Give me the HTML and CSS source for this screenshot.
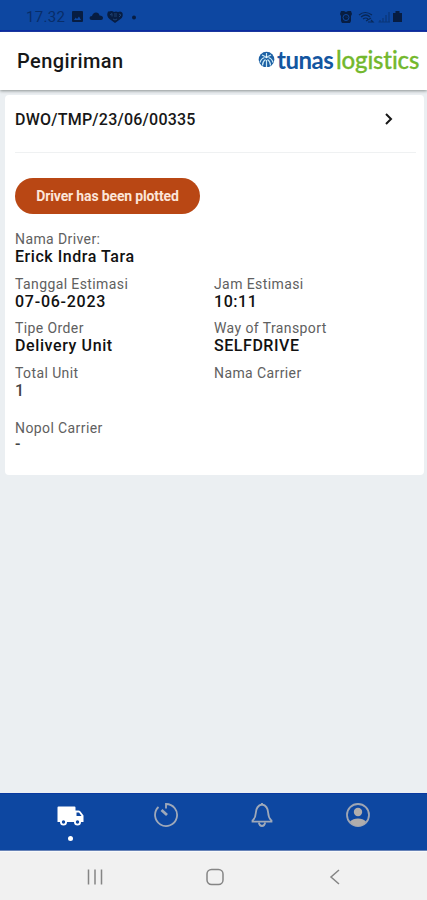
FILE: index.html
```html
<!DOCTYPE html>
<html lang="id">
<head>
<meta charset="utf-8">
<title>Pengiriman</title>
<link rel="stylesheet" href="styles.css">
</head>
<body>
<div class="statusbar">
  <span class="clock">17.32</span>
  <svg class="status-left" width="68" height="14" viewBox="0 0 68 14">
    <path fill-rule="evenodd" d="M2 1h9q1 0 1 1v9q0 1-1 1H2q-1 0-1-1V2q0-1 1-1zM3 10h7L8 6.500 6 9 4.700 7.500z"/>
    <path d="M21 10q-2.500 0-2.500-2t2.500-2q1-3.500 4-3.500T28.500 5.500q3.500 0 3.500 2.500 0 2-2 2z"/>
    <path d="M38 1.500q3-1 5 .5 2-1 4 0 3-1.500 4.500 1 1 4-2 6l-5.500 4-5.500-4q-3.500-3-1.500-7.500z"/>
    <path class="face" d="M39 5l2-1.500v3M43 4h3M43 6h3M48 4l2 1-2 2M42 9l2 1 2-1"/>
    <circle cx="63" cy="7.500" r="2"/>
  </svg>
  <svg class="status-right" width="66" height="14" viewBox="0 0 66 14">
    <path d="M2 1h3l2 1 2-1h3l1 3-1 2v5l-1 2H3l-1-2V6L1 4z"/>
    <circle cx="7" cy="7.500" r="3" class="dial"/><path class="thin" d="M7 5.500v2h2"/>
    <path class="thin" d="M20 5q6-5 13 0M22 7q5-4 9 0M24 9q3-2 5 0M27 11l5-3M29 12h5l-2-2"/>
    <path class="thin faint" d="M41 12v-2M44 12V8M47 12V5M50 12V2M39.500 12H51"/>
    <path d="M54 3h2.500V1h4v2H63v9H54z"/>
  </svg>
</div>
<header class="header">
  <h1>Pengiriman</h1>
  <div class="logo">
    <svg width="17" height="17" viewBox="0 0 17 17">
      <path fill="#1c60a4" d="M3.500 14.500A7.800 7.800 0 1 1 13.500 14.500L11 16H6z"/>
      <path fill="none" stroke="#cdeaf5" stroke-width="1.200" d="M2 11.500q1-4 4.500-5M4.500 14.500q0-4 3-6M15 11.500q-1-4-4.500-5M12.500 14.500q0-4-3-6M8.500 9v7M4 4l3 1.500M13 4l-3 1.500M8.500 2v3"/>
      <circle cx="8.500" cy="6" r="1.300" fill="#eefaff"/>
    </svg>
    <span class="tunas">tunas</span><span class="logistics">logistics</span>
  </div>
</header>
<main class="content">
  <section class="card">
    <div class="order">
      <span class="number">DWO/TMP/23/06/00335</span>
      <svg width="10" height="14" viewBox="0 0 10 14"><path d="M2 2l5 5-5 5"/></svg>
    </div>
    <div class="status">Driver has been plotted</div>
    <dl class="details">
      <div class="wide"><dt>Nama Driver:</dt><dd>Erick Indra Tara</dd></div>
      <div><dt>Tanggal Estimasi</dt><dd class="date">07-06-2023</dd></div>
      <div><dt>Jam Estimasi</dt><dd>10:11</dd></div>
      <div><dt>Tipe Order</dt><dd class="unit">Delivery Unit</dd></div>
      <div><dt>Way of Transport</dt><dd>SELFDRIVE</dd></div>
      <div class="tall"><dt>Total Unit</dt><dd class="soft">1</dd></div>
      <div class="tall"><dt>Nama Carrier</dt><dd></dd></div>
      <div><dt>Nopol Carrier</dt><dd class="soft dash">-</dd></div>
    </dl>
  </section>
</main>
<nav class="tabs">
  <div class="tab active">
    <svg width="28" height="24" viewBox="0 0 28 24">
      <path fill="#fff" fill-rule="evenodd" d="M2.500 2.500h16q1 0 1 1v3h3q1 0 2 1l3 4V18H1.500V3.500q0-1 1-1zM20.500 8.500V12h5L23 8.500z"/>
      <circle cx="7.500" cy="18" r="3.500" fill="#fff"/><circle cx="21.500" cy="18" r="3.500" fill="#fff"/>
      <circle cx="7.500" cy="18" r="1.700" fill="#0d47a1"/><circle cx="21.500" cy="18" r="1.700" fill="#0d47a1"/>
    </svg>
    <span class="dot"></span>
  </div>
  <div class="tab">
    <svg width="26" height="26" viewBox="0 0 26 26" class="outline">
      <path d="M5.500 5A11 11 0 1 0 13 2v4.500"/><path d="M8.500 8l5.500 5" stroke-width="2.800"/>
    </svg>
  </div>
  <div class="tab">
    <svg width="26" height="26" viewBox="0 0 26 26" class="outline">
      <path d="M13 2.500C8 3.500 7 7 6.800 11c-.2 5-1.800 6-3.300 7.500v1.200h19v-1.200C21 17 19.400 16 19.200 11 19 7 18 3.500 13 2.500z"/><path d="M9.800 20.500q.7 3.500 3.200 3.500t3.200-3.500M13 1v2"/>
    </svg>
  </div>
  <div class="tab">
    <svg width="26" height="26" viewBox="0 0 26 26">
      <circle cx="13" cy="13" r="11" fill="none" stroke="#9fa6b3" stroke-width="1.800"/>
      <circle cx="13" cy="10" r="4.200" fill="#b0adac"/>
      <path fill="#b0adac" d="M5 19.500Q8 16.500 13 16.500T21 19.500Q18 24 13 24T5 19.500z"/>
    </svg>
  </div>
</nav>
<footer class="system">
  <svg width="18" height="18" viewBox="0 0 18 18"><path d="M2.500 1.500v15M9 1.500v15M15.500 1.500v15"/></svg>
  <svg width="18" height="18" viewBox="0 0 18 18"><rect x="1" y="1.500" width="16" height="15" rx="4.500"/></svg>
  <svg width="18" height="18" viewBox="0 0 18 18"><path d="M13 2L5 9l8 7"/></svg>
</footer>
</body>
</html>
```
FILE: styles.css
```css
* { box-sizing: border-box; margin: 0; padding: 0; }
body {
  width: 427px;
  height: 900px;
  display: flex;
  flex-direction: column;
  overflow: hidden;
  background: #ebeff2;
  font-family: Roboto, "Noto Sans", sans-serif;
  color: #171717;
}
svg { display: block; flex: none; }
.statusbar {
  height: 32px;
  flex: none;
  display: flex;
  align-items: center;
  padding: 3px 22px 0 26px;
  background: #0d47a1;
  border-bottom: 2px solid #0526a2;
  color: #082d69;
}
.clock { width: 45px; font-size: 15px; letter-spacing: 0.3px; }
.status-left, .status-right { fill: #071d42; }
.status-right { margin-left: auto; }
.face { fill: none; stroke: #244c80; stroke-width: 0.8; }
.dial { fill: none; stroke: #0d47a1; stroke-width: 1; }
.thin { fill: none; stroke: #082858; stroke-width: 1.2; }
.faint { stroke: #0a3678; }
.header {
  height: 58px;
  flex: none;
  display: flex;
  align-items: center;
  justify-content: space-between;
  padding: 0 0 0 17px;
  background: #fff;
  box-shadow: 0 1px 3px #8b9090;
  position: relative;
}
h1 { font-size: 20px; font-weight: 500; letter-spacing: 0.4px; line-height: 24px; }
.logo {
  width: 169px;
  display: flex;
  align-items: center;
  font-family: Lato, sans-serif;
  font-size: 24px;
  line-height: 32px;
  font-variant-ligatures: none;
  padding-bottom: 3px;
}
.tunas { width: 61px; padding-left: 2px; color: #1456a0; font-weight: 700; letter-spacing: -0.5px; }
.logistics { color: #73b82d; font-weight: 500; letter-spacing: -0.15px; -webkit-text-stroke: 0.3px #73b82d; }
.content { flex: 1; padding: 5px 3px 0 5px; }
.card { height: 380px; padding: 0 8px 0 10px; background: #fff; border-radius: 4px; }
.order {
  height: 58px;
  display: flex;
  align-items: center;
  justify-content: space-between;
  padding: 0 22px 9px 0;
  border-bottom: 1px solid #eff1f2;
}
.order svg { fill: none; stroke: #171717; stroke-width: 2; }
.number { font-size: 16px; font-weight: 500; letter-spacing: 0.23px; }
.status {
  width: 185px;
  height: 36px;
  margin-top: 25px;
  border-radius: 18px;
  background: #b94714;
  color: #fce5d9;
  font-size: 14px;
  font-weight: 700;
  letter-spacing: -0.15px;
  line-height: 36px;
  text-align: center;
}
.details { display: grid; grid-template-columns: 199px 1fr; margin-top: 17px; }
.details > div { height: 44.5px; }
.details > .wide { grid-column: 1 / 3; }
.details > .tall { height: 55px; }
dt { font-size: 14px; line-height: 17px; letter-spacing: 0.4px; color: #606060; font-weight: 400; }
dd { font-size: 16px; line-height: 17px; letter-spacing: 0.55px; font-weight: 500; color: #111; }
.date { letter-spacing: 0.75px; }
.unit { letter-spacing: 0.6px; }
.soft { color: #444; }
.dash { line-height: 14px; }
.tabs {
  height: 58px;
  flex: none;
  display: grid;
  grid-template-columns: repeat(4, 96px);
  padding: 8px 0 0 22px;
  background: #0d47a1;
  border-top: 1px solid #0939a0;
  border-bottom: 1px solid #6783b8;
}
.tab { display: flex; flex-direction: column; align-items: center; }
.active { padding-top: 2px; }
.dot { width: 5px; height: 5px; margin-top: 8px; border-radius: 50%; background: #fff; }
.outline { fill: none; stroke: #9fa9b9; stroke-width: 1.8; }
.system {
  height: 49px;
  flex: none;
  display: grid;
  grid-template-columns: repeat(3, 120px);
  justify-content: center;
  justify-items: center;
  align-items: center;
  padding: 1px 0 0 3px;
  background: #f1f1f1;
  border-top: 1px solid #f8fafb;
}
.system svg { fill: none; stroke: #858585; stroke-width: 1.5; }
```
